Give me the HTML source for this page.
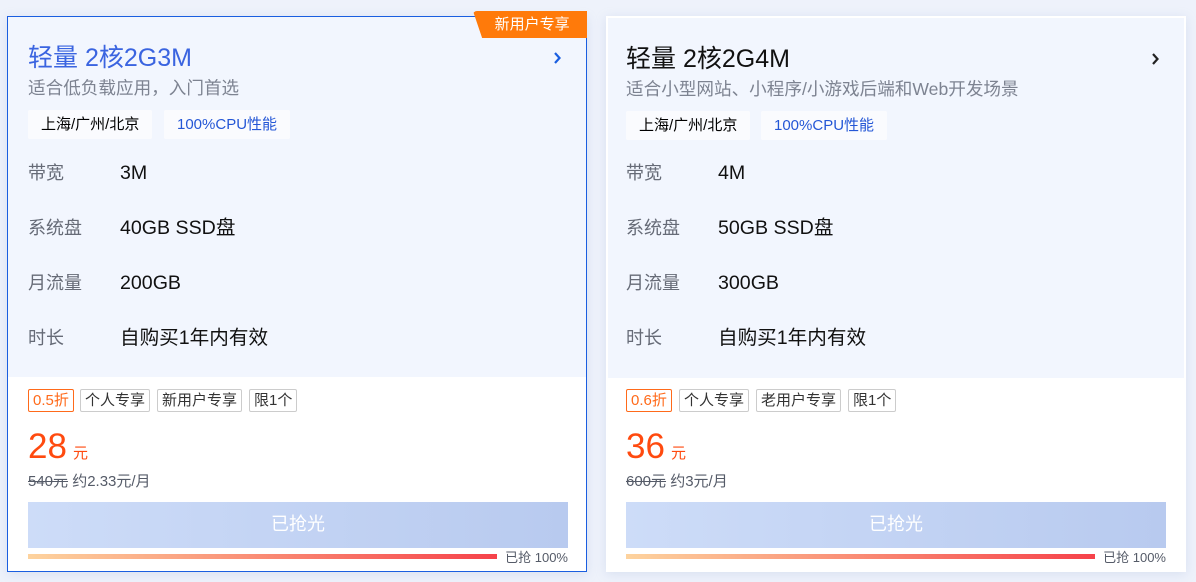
<!DOCTYPE html>
<html><head><meta charset="utf-8"><style>
*{margin:0;padding:0;box-sizing:border-box}
body{width:1196px;height:582px;background:#eef2fb;font-family:"Liberation Sans","Noto Sans CJK SC",sans-serif;position:relative;overflow:hidden}
.card{position:absolute;top:16px;width:580px;height:556px;background:#fff;box-shadow:0 2px 10px rgba(150,170,210,.25)}
.c1{left:7px;border:1px solid #1a5ee0}
.c2{left:606px;border:2px solid #fff}
.top{position:absolute;left:0;top:0;right:0;height:360px;background:#f2f6fe}
.a{position:absolute;white-space:nowrap}
.title{top:25px;font-size:25px;line-height:32px}
.sub{top:59px;font-size:17.6px;color:#7d8391;line-height:24px}
.tag{top:93px;height:29px;background:#fafbfe;font-size:15px;line-height:29px;padding:0 13px;border-radius:2px}
.lab{font-size:18px;color:#666b77;line-height:24px}
.val{font-size:19.6px;color:#111;line-height:24px}
.bd{top:372px;height:23px;border:1px solid #ccc;border-radius:2px;font-size:15px;line-height:21px;padding:0 4px;color:#333}
.price{top:410px;font-size:35px;color:#ff4a0f;line-height:40px}
.price span{font-size:15px;margin-left:6px}
.orig{top:453px;font-size:15px;color:#555b68}
.btn{top:485px;height:46px;width:540px;background:linear-gradient(90deg,#cddcf8,#b8caef);color:#fff;font-size:18px;text-align:center;line-height:44px}
.bar{top:537px;height:5px;width:469px;background:linear-gradient(90deg,#fdd39e,#f6424a)}
.pct{top:530px;font-size:13px;color:#555b68}
.chev{top:34px;}
</style></head><body>
<div class="card c1">
<div class="top"></div>
<div class="a" style="right:-1px;top:-6px;width:114px;height:27px;background:#ff7a0a;color:#fff;font-size:15px;line-height:27px;text-align:center;border-radius:4px 0 0 0;clip-path:polygon(0 0,100% 0,100% 100%,8% 100%)">&nbsp;新用户专享</div>
<div class="a title" style="left:20px;color:#3a64e0">轻量 2核2G3M</div>
<svg class="a chev" style="left:545px" width="10" height="14"><path d="M2 2l4.5 5-4.5 5" stroke="#1a5ee0" stroke-width="2.2" fill="none"/></svg>
<div class="a sub" style="left:20px">适合低负载应用，入门首选</div>
<div class="a tag" style="left:20px">上海/广州/北京</div>
<div class="a tag" style="left:156px;color:#2457d6">100%CPU性能</div>
<div class="a lab" style="left:20px;top:144px">带宽</div><div class="a val" style="left:112px;top:144px">3M</div>
<div class="a lab" style="left:20px;top:199px">系统盘</div><div class="a val" style="left:112px;top:199px">40GB SSD盘</div>
<div class="a lab" style="left:20px;top:254px">月流量</div><div class="a val" style="left:112px;top:254px">200GB</div>
<div class="a lab" style="left:20px;top:309px">时长</div><div class="a val" style="left:112px;top:309px">自购买1年内有效</div>
<div class="a bd" style="left:20px;border-color:#ff6a1a;color:#ff6a1a">0.5折</div>
<div class="a bd" style="left:72px">个人专享</div>
<div class="a bd" style="left:149px">新用户专享</div>
<div class="a bd" style="left:241px">限1个</div>
<div class="a price" style="left:20px">28<span>元</span></div>
<div class="a orig" style="left:20px"><s>540元</s> 约2.33元/月</div>
<div class="a btn" style="left:20px">已抢光</div>
<div class="a bar" style="left:20px"></div>
<div class="a pct" style="right:18px">已抢 100%</div>
</div>
<div class="card c2">
<div class="top"></div>
<div class="a title" style="left:18px;color:#111">轻量 2核2G4M</div>
<svg class="a chev" style="left:543px" width="10" height="14"><path d="M2 2l4.5 5-4.5 5" stroke="#222" stroke-width="2.2" fill="none"/></svg>
<div class="a sub" style="left:18px">适合小型网站、小程序/小游戏后端和Web开发场景</div>
<div class="a tag" style="left:18px">上海/广州/北京</div>
<div class="a tag" style="left:153px;color:#2457d6">100%CPU性能</div>
<div class="a lab" style="left:18px;top:143px">带宽</div><div class="a val" style="left:110px;top:143px">4M</div>
<div class="a lab" style="left:18px;top:198px">系统盘</div><div class="a val" style="left:110px;top:198px">50GB SSD盘</div>
<div class="a lab" style="left:18px;top:253px">月流量</div><div class="a val" style="left:110px;top:253px">300GB</div>
<div class="a lab" style="left:18px;top:308px">时长</div><div class="a val" style="left:110px;top:308px">自购买1年内有效</div>
<div class="a bd" style="left:18px;top:371px;border-color:#ff6a1a;color:#ff6a1a">0.6折</div>
<div class="a bd" style="left:71px;top:371px">个人专享</div>
<div class="a bd" style="left:148px;top:371px">老用户专享</div>
<div class="a bd" style="left:240px;top:371px">限1个</div>
<div class="a price" style="left:18px;top:409px">36<span>元</span></div>
<div class="a orig" style="left:18px;top:452px"><s>600元</s> 约3元/月</div>
<div class="a btn" style="left:18px;top:484px">已抢光</div>
<div class="a bar" style="left:18px;top:536px"></div>
<div class="a pct" style="right:18px;top:529px">已抢 100%</div>
</div>
</body></html>
